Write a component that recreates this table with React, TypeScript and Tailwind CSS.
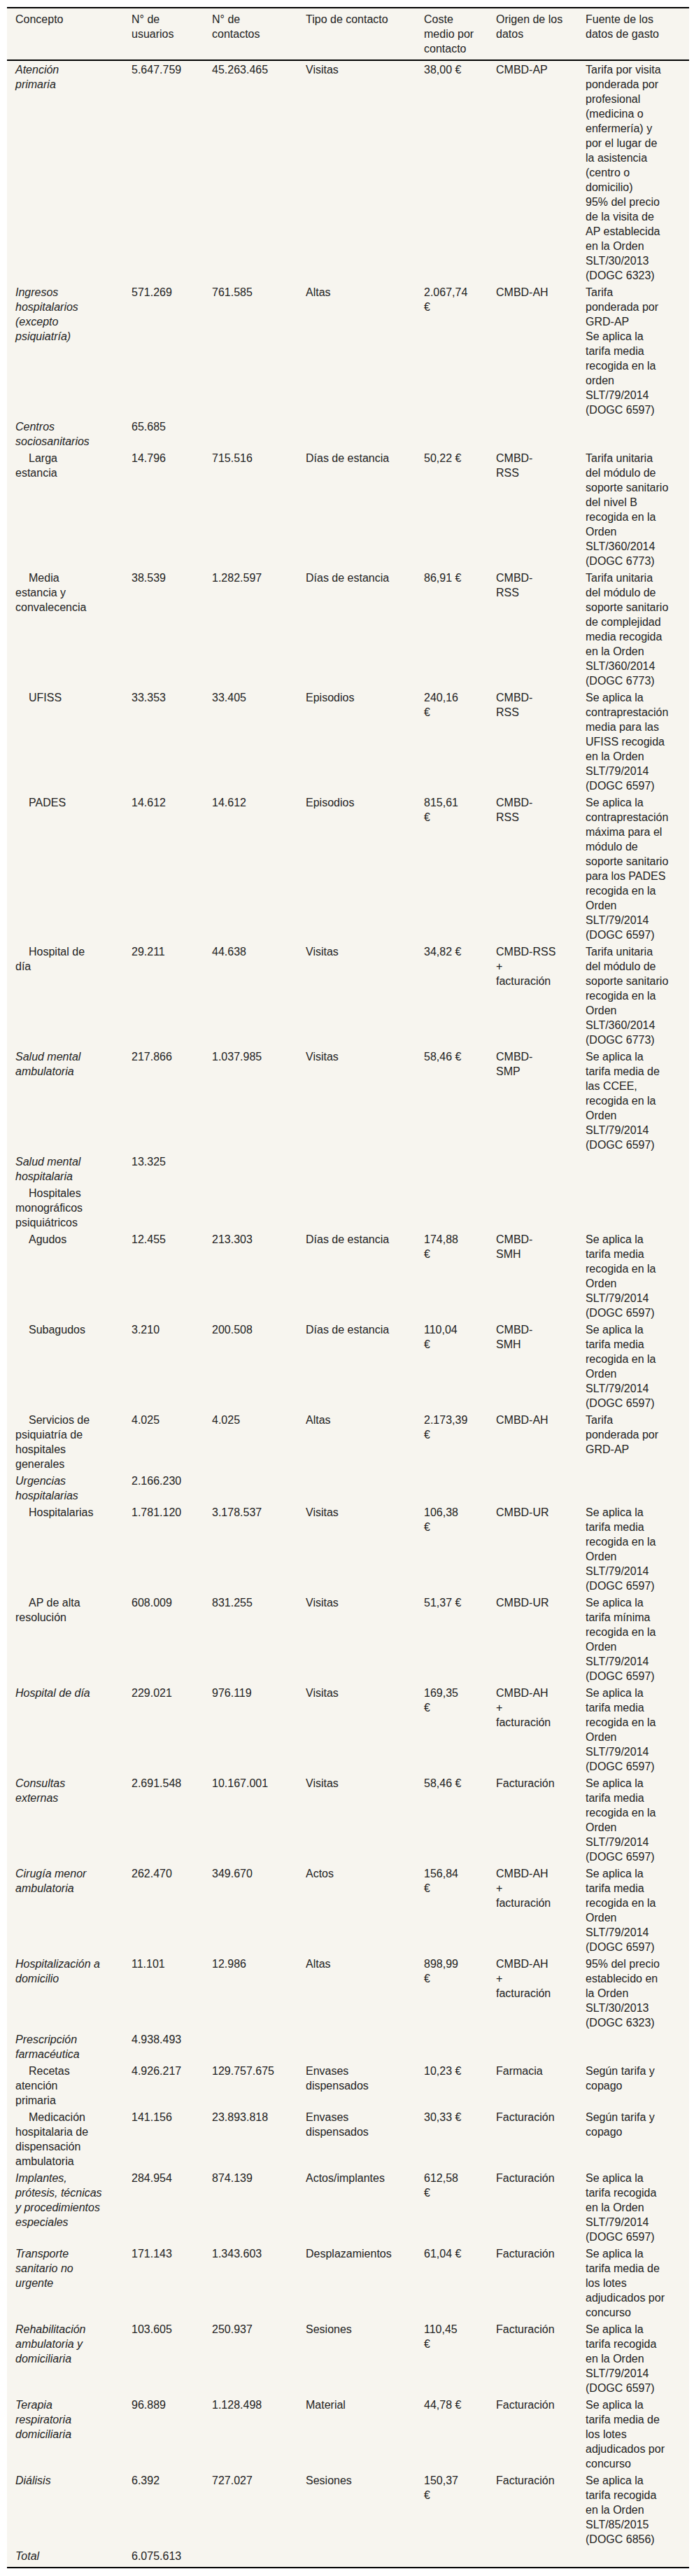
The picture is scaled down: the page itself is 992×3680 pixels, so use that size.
import type { ReactNode } from "react";

interface Row {
  concept: string;
  kind: "main" | "sub";
  users?: string;
  contacts?: string;
  type?: string;
  cost?: string;
  origin?: string;
  source?: string;
}

// "\n" marks a hard line break (cells use whitespace-pre-line)
const media = "Se aplica la tarifa media recogida en la Orden SLT/79/2014 (DOGC 6597)";
const recogida = "Se aplica la tarifa recogida en la Orden SLT/79/2014 (DOGC 6597)";
const lotes = "Se aplica la tarifa media de los lotes adjudicados por concurso";

const rows: Row[] = [
  {
    concept: "Atención\nprimaria",
    kind: "main",
    users: "5.647.759",
    contacts: "45.263.465",
    type: "Visitas",
    cost: "38,00 €",
    origin: "CMBD-AP",
    source:
      "Tarifa por visita ponderada por profesional (medicina o enfermería) y por el lugar de la asistencia (centro o domicilio)\n95% del precio de la visita de AP establecida en la Orden SLT/30/2013 (DOGC 6323)",
  },
  {
    concept: "Ingresos\nhospitalarios\n(excepto\npsiquiatría)",
    kind: "main",
    users: "571.269",
    contacts: "761.585",
    type: "Altas",
    cost: "2.067,74\n€",
    origin: "CMBD-AH",
    source: "Tarifa ponderada por GRD-AP\nSe aplica la tarifa media recogida en la orden SLT/79/2014 (DOGC 6597)",
  },
  { concept: "Centros\nsociosanitarios", kind: "main", users: "65.685" },
  {
    concept: "Larga\nestancia",
    kind: "sub",
    users: "14.796",
    contacts: "715.516",
    type: "Días de estancia",
    cost: "50,22 €",
    origin: "CMBD-\nRSS",
    source: "Tarifa unitaria del módulo de soporte sanitario del nivel B recogida en la Orden SLT/360/2014 (DOGC 6773)",
  },
  {
    concept: "Media\nestancia y\nconvalecencia",
    kind: "sub",
    users: "38.539",
    contacts: "1.282.597",
    type: "Días de estancia",
    cost: "86,91 €",
    origin: "CMBD-\nRSS",
    source:
      "Tarifa unitaria del módulo de soporte sanitario de complejidad media recogida en la Orden SLT/360/2014 (DOGC 6773)",
  },
  {
    concept: "UFISS",
    kind: "sub",
    users: "33.353",
    contacts: "33.405",
    type: "Episodios",
    cost: "240,16\n€",
    origin: "CMBD-\nRSS",
    source: "Se aplica la contraprestación media para las UFISS recogida en la Orden SLT/79/2014 (DOGC 6597)",
  },
  {
    concept: "PADES",
    kind: "sub",
    users: "14.612",
    contacts: "14.612",
    type: "Episodios",
    cost: "815,61\n€",
    origin: "CMBD-\nRSS",
    source:
      "Se aplica la contraprestación máxima para el módulo de soporte sanitario para los PADES recogida en la Orden SLT/79/2014 (DOGC 6597)",
  },
  {
    concept: "Hospital de\ndía",
    kind: "sub",
    users: "29.211",
    contacts: "44.638",
    type: "Visitas",
    cost: "34,82 €",
    origin: "CMBD-RSS\n+\nfacturación",
    source: "Tarifa unitaria del módulo de soporte sanitario recogida en la Orden SLT/360/2014 (DOGC 6773)",
  },
  {
    concept: "Salud mental\nambulatoria",
    kind: "main",
    users: "217.866",
    contacts: "1.037.985",
    type: "Visitas",
    cost: "58,46 €",
    origin: "CMBD-\nSMP",
    source: "Se aplica la tarifa media de las CCEE, recogida en la Orden SLT/79/2014 (DOGC 6597)",
  },
  { concept: "Salud mental\nhospitalaria", kind: "main", users: "13.325" },
  { concept: "Hospitales\nmonográficos\npsiquiátricos", kind: "sub" },
  {
    concept: "Agudos",
    kind: "sub",
    users: "12.455",
    contacts: "213.303",
    type: "Días de estancia",
    cost: "174,88\n€",
    origin: "CMBD-\nSMH",
    source: media,
  },
  {
    concept: "Subagudos",
    kind: "sub",
    users: "3.210",
    contacts: "200.508",
    type: "Días de estancia",
    cost: "110,04\n€",
    origin: "CMBD-\nSMH",
    source: media,
  },
  {
    concept: "Servicios de\npsiquiatría de\nhospitales\ngenerales",
    kind: "sub",
    users: "4.025",
    contacts: "4.025",
    type: "Altas",
    cost: "2.173,39\n€",
    origin: "CMBD-AH",
    source: "Tarifa ponderada por GRD-AP",
  },
  { concept: "Urgencias\nhospitalarias", kind: "main", users: "2.166.230" },
  {
    concept: "Hospitalarias",
    kind: "sub",
    users: "1.781.120",
    contacts: "3.178.537",
    type: "Visitas",
    cost: "106,38\n€",
    origin: "CMBD-UR",
    source: media,
  },
  {
    concept: "AP de alta\nresolución",
    kind: "sub",
    users: "608.009",
    contacts: "831.255",
    type: "Visitas",
    cost: "51,37 €",
    origin: "CMBD-UR",
    source: "Se aplica la tarifa mínima recogida en la Orden SLT/79/2014 (DOGC 6597)",
  },
  {
    concept: "Hospital de día",
    kind: "main",
    users: "229.021",
    contacts: "976.119",
    type: "Visitas",
    cost: "169,35\n€",
    origin: "CMBD-AH\n+\nfacturación",
    source: media,
  },
  {
    concept: "Consultas\nexternas",
    kind: "main",
    users: "2.691.548",
    contacts: "10.167.001",
    type: "Visitas",
    cost: "58,46 €",
    origin: "Facturación",
    source: media,
  },
  {
    concept: "Cirugía menor\nambulatoria",
    kind: "main",
    users: "262.470",
    contacts: "349.670",
    type: "Actos",
    cost: "156,84\n€",
    origin: "CMBD-AH\n+\nfacturación",
    source: media,
  },
  {
    concept: "Hospitalización a\ndomicilio",
    kind: "main",
    users: "11.101",
    contacts: "12.986",
    type: "Altas",
    cost: "898,99\n€",
    origin: "CMBD-AH\n+\nfacturación",
    source: "95% del precio establecido en la Orden SLT/30/2013 (DOGC 6323)",
  },
  { concept: "Prescripción\nfarmacéutica", kind: "main", users: "4.938.493" },
  {
    concept: "Recetas\natención\nprimaria",
    kind: "sub",
    users: "4.926.217",
    contacts: "129.757.675",
    type: "Envases dispensados",
    cost: "10,23 €",
    origin: "Farmacia",
    source: "Según tarifa y copago",
  },
  {
    concept: "Medicación\nhospitalaria de\ndispensación\nambulatoria",
    kind: "sub",
    users: "141.156",
    contacts: "23.893.818",
    type: "Envases dispensados",
    cost: "30,33 €",
    origin: "Facturación",
    source: "Según tarifa y copago",
  },
  {
    concept: "Implantes,\nprótesis, técnicas\ny procedimientos\nespeciales",
    kind: "main",
    users: "284.954",
    contacts: "874.139",
    type: "Actos/implantes",
    cost: "612,58\n€",
    origin: "Facturación",
    source: recogida,
  },
  {
    concept: "Transporte\nsanitario no\nurgente",
    kind: "main",
    users: "171.143",
    contacts: "1.343.603",
    type: "Desplazamientos",
    cost: "61,04 €",
    origin: "Facturación",
    source: lotes,
  },
  {
    concept: "Rehabilitación\nambulatoria y\ndomiciliaria",
    kind: "main",
    users: "103.605",
    contacts: "250.937",
    type: "Sesiones",
    cost: "110,45\n€",
    origin: "Facturación",
    source: recogida,
  },
  {
    concept: "Terapia\nrespiratoria\ndomiciliaria",
    kind: "main",
    users: "96.889",
    contacts: "1.128.498",
    type: "Material",
    cost: "44,78 €",
    origin: "Facturación",
    source: lotes,
  },
  {
    concept: "Diálisis",
    kind: "main",
    users: "6.392",
    contacts: "727.027",
    type: "Sesiones",
    cost: "150,37\n€",
    origin: "Facturación",
    source: "Se aplica la tarifa recogida en la Orden SLT/85/2015 (DOGC 6856)",
  },
];

// padding per column: text starts line up with the reference, right padding sets the wrap width
const pad = [
  "pl-[12px] pr-[24px]",
  "pl-[10px] pr-[15px]",
  "pl-[10px] pr-[24px]",
  "pl-[10px] pr-[19px]",
  "pl-[10px] pr-[20px]",
  "pl-[10px] pr-[21px]",
  "pl-[10px] pr-[29px]",
];

const headers = [
  "Concepto",
  "N° de usuarios",
  "N° de contactos",
  "Tipo de contacto",
  "Coste medio por contacto",
  "Origen de los datos",
  "Fuente de los datos de gasto",
];

function Cell({ i, children, className = "" }: { i: number; children?: ReactNode; className?: string }) {
  return (
    <td className={`${pad[i]} py-[1.5px] align-top text-left font-normal whitespace-pre-line ${className}`}>
      {children}
    </td>
  );
}

export default function App() {
  return (
    <div className="min-h-screen bg-white pt-[10px] pl-[10px] font-['Liberation_Sans',Arial,sans-serif] text-[16px] leading-[21px] text-[#222]">
      <table className="w-[975px] table-fixed border-collapse border-y-2 border-black bg-[#f7f5ef]">
        <colgroup>
          <col className="w-[168px]" />
          <col className="w-[115px]" />
          <col className="w-[134px]" />
          <col className="w-[169px]" />
          <col className="w-[103px]" />
          <col className="w-[128px]" />
          <col className="w-[158px]" />
        </colgroup>
        <thead>
          <tr className="border-b-2 border-black">
            {headers.map((h, i) => (
              <th key={h} className={`${pad[i]} py-[5px] align-top text-left font-normal`}>
                {h}
              </th>
            ))}
          </tr>
        </thead>
        <tbody>
          {rows.map((r, idx) => (
            <tr key={idx}>
              <Cell i={0} className={r.kind === "main" ? "italic" : "indent-[19px]"}>
                {r.concept}
              </Cell>
              <Cell i={1}>{r.users}</Cell>
              <Cell i={2}>{r.contacts}</Cell>
              <Cell i={3}>{r.type}</Cell>
              <Cell i={4}>{r.cost}</Cell>
              <Cell i={5}>{r.origin}</Cell>
              <Cell i={6}>{r.source}</Cell>
            </tr>
          ))}
          <tr>
            <td className={`${pad[0]} pt-[1.5px] pb-[5px] align-top italic`}>Total</td>
            <td className={`${pad[1]} pt-[1.5px] pb-[5px] align-top`}>6.075.613</td>
            <td colSpan={5} />
          </tr>
        </tbody>
      </table>
    </div>
  );
}
